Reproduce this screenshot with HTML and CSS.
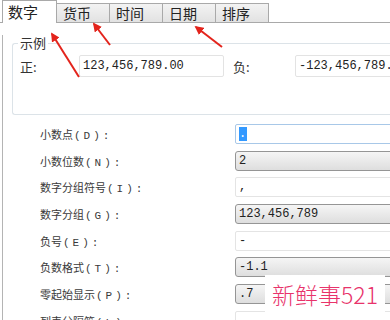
FILE: index.html
```html
<!DOCTYPE html>
<html>
<head>
    <title>自定义格式</title>
    <link rel="stylesheet" href="styles.css">
</head>
<body>
    <div class="dialog">
        <!-- tab strip -->
        <div class="tabs">
            <div class="tab active">数字</div>
            <div class="tab">货币</div>
            <div class="tab">时间</div>
            <div class="tab">日期</div>
            <div class="tab">排序</div>
        </div>

        <div class="panel">
            <!-- sample group -->
            <fieldset class="sample">
                <legend>示例</legend>
                <div class="sample-row">
                    <span class="sample-label">正:</span>
                    <div class="box">123,456,789.00</div>
                    <span class="sample-label neg">负:</span>
                    <div class="box">-123,456,789.00</div>
                </div>
            </fieldset>

            <!-- settings -->
            <div class="form">
                <div class="row">
                    <div class="label">小数点<span class="key">(D):</span></div>
                    <div class="field focus"><span class="sel">.</span></div>
                </div>
                <div class="row">
                    <div class="label">小数位数<span class="key">(N):</span></div>
                    <div class="field drop">2</div>
                </div>
                <div class="row">
                    <div class="label">数字分组符号<span class="key">(I):</span></div>
                    <div class="field">,</div>
                </div>
                <div class="row">
                    <div class="label">数字分组<span class="key">(G):</span></div>
                    <div class="field drop">123,456,789</div>
                </div>
                <div class="row">
                    <div class="label">负号<span class="key">(E):</span></div>
                    <div class="field">-</div>
                </div>
                <div class="row">
                    <div class="label">负数格式<span class="key">(T):</span></div>
                    <div class="field drop">-1.1</div>
                </div>
                <div class="row">
                    <div class="label">零起始显示<span class="key">(P):</span></div>
                    <div class="field drop">.7</div>
                </div>
                <div class="row">
                    <div class="label">列表分隔符<span class="key">(L):</span></div>
                    <div class="field">,</div>
                </div>
            </div>
        </div>

        <div class="mark">新鲜事521</div>

        <svg class="arrows" width="390" height="320" viewBox="0 0 390 320">
            <defs>
                <marker id="head" viewBox="0 0 10 10" refX="8" refY="5"
                        markerWidth="9" markerHeight="9" markerUnits="userSpaceOnUse" orient="auto">
                    <path d="M0,0 L10,5 L0,10 z" fill="#e3241c"/>
                </marker>
            </defs>
            <line x1="79" y1="77" x2="52" y2="34" marker-end="url(#head)"/>
            <line x1="110" y1="45" x2="94" y2="24" marker-end="url(#head)"/>
            <line x1="222" y1="47" x2="196" y2="27" marker-end="url(#head)"/>
        </svg>
    </div>
</body>
</html>
```

FILE: styles.css
```css
body {
    margin: 0;
    background: #fff;
    font-family: "Noto Sans CJK SC", "Liberation Sans", sans-serif;
    color: #333;
}
.dialog {
    position: relative;
    width: 390px;
    height: 320px;
    overflow: hidden;
}

/* tabs */
.tabs {
    display: flex;
    align-items: flex-end;
    height: 22px;
    padding-left: 2px;
    border-bottom: 1px solid #a9a9a9;
}
.tab {
    box-sizing: border-box;
    width: 54px;
    height: 19px;
    padding-left: 6px;
    font-size: 14px;
    line-height: 18px;
    color: #222;
    background: linear-gradient(#f3f3f3, #e2e2e2);
    border: 1px solid #a9a9a9;
    border-bottom: none;
    margin-left: -1px;
}
.tab.active {
    width: 55px;
    height: 23px;
    margin-bottom: -1px;
    margin-left: 0;
    padding-left: 5px;
    font-size: 15px;
    line-height: 21px;
    background: #fff;
    position: relative;
    z-index: 1;
}

/* page */
.panel {
    margin-left: 2px;
    border-left: 1px solid #b4b4b4;
    height: 300px;
}
.sample {
    margin: 12px 0 0 9px;
    padding: 0 0 37px 7px;
    border: 1px solid #dce3e8;
    border-right: none;
    border-radius: 3px;
}
.sample legend {
    margin-left: -2px;
    padding: 0 2px;
    font-size: 13px;
    line-height: 16px;
    color: #333;
}
.sample-row {
    display: flex;
    align-items: center;
    margin-top: 4px;
}
.sample-label {
    width: 59px;
    font-size: 13px;
}
.sample-label.neg {
    width: 62px;
    margin-left: 9px;
}
.box {
    box-sizing: border-box;
    width: 145px;
    height: 22px;
    flex-shrink: 0;
    padding-left: 3px;
    border: 1px solid #e3e3e3;
    border-radius: 2px;
    font-family: "Liberation Mono", monospace;
    font-size: 12px;
    line-height: 20px;
    color: #222;
}

/* settings rows */
.form {
    display: flex;
    flex-direction: column;
    gap: 6.7px;
    margin-top: 9px;
    padding-left: 37px;
}
.row {
    display: flex;
    height: 20px;
}
.label {
    width: 195px;
    flex-shrink: 0;
    font-size: 11px;
    line-height: 20px;
    color: #3a3a3a;
    white-space: nowrap;
}
.key {
    font-family: "Liberation Mono", monospace;
    letter-spacing: 3px;
    margin-left: 1px;
}
.field {
    box-sizing: border-box;
    width: 170px;
    flex-shrink: 0;
    height: 20px;
    padding-left: 3px;
    border: 1px solid #e4e4e4;
    border-radius: 2px;
    font-family: "Liberation Mono", monospace;
    font-size: 12px;
    line-height: 18px;
    color: #222;
}
.field.drop {
    border-color: #959595;
    border-radius: 3px;
    background: linear-gradient(#f5f5f5, #dedede);
}
.field.focus {
    border-color: #a8c8e8;
}
.sel {
    display: inline-block;
    width: 8px;
    height: 14px;
    margin-top: 2px;
    vertical-align: top;
    background: #3399ff;
    color: #fff;
    line-height: 14px;
}

/* overlays */
.mark {
    position: absolute;
    left: 265px;
    top: 275px;
    width: 120px;
    height: 38px;
    background: #fff;
    color: #e8336b;
    font-size: 23px;
    line-height: 38px;
    text-align: center;
    font-weight: 300;
}
.arrows {
    position: absolute;
    left: 0;
    top: 0;
    pointer-events: none;
}
.arrows line {
    stroke: #e3241c;
    stroke-width: 2;
}
```
